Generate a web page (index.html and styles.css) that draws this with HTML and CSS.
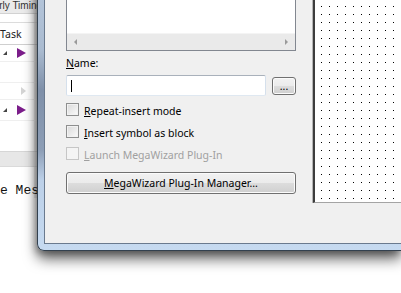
FILE: index.html
```html
<!DOCTYPE html>
<html lang="en">
<head>
    <meta charset="UTF-8">
    <title>Symbol</title>
    <link rel="stylesheet" href="styles.css">
</head>
<body>
<div class="desk">

    <!-- main window, partly hidden behind the dialog -->
    <div class="behind">
        <div class="behind-title">Early Timing</div>
        <div class="behind-gap"></div>
        <div class="behind-head">Task</div>
        <div class="behind-row"><span class="tri-small"></span><span class="tri-play"></span></div>
        <div class="behind-row tall"></div>
        <div class="behind-row"><span class="tri-ghost"></span></div>
        <div class="behind-row tall"><span class="tri-small"></span><span class="tri-play"></span></div>
        <div class="behind-fill"></div>
        <div class="behind-bar"></div>
        <div class="behind-msg">e Messages</div>
    </div>

    <!-- symbol dialog -->
    <div class="dialog">
        <div class="client">
            <div class="form">
                <div class="listbox">
                    <div class="hscroll">
                        <span class="arrow-left"></span>
                        <span class="arrow-right"></span>
                    </div>
                </div>

                <div class="name-label"><u>N</u>ame:</div>
                <div class="name-row">
                    <div class="textbox"><span class="caret"></span></div>
                    <button class="btn browse">...</button>
                </div>

                <label class="check"><span class="box"></span><span class="check-text"><u>R</u>epeat-insert mode</span></label>
                <label class="check"><span class="box"></span><span class="check-text"><u>I</u>nsert symbol as block</span></label>
                <label class="check disabled"><span class="box"></span><span class="check-text"><u>L</u>aunch MegaWizard Plug-In</span></label>

                <button class="btn wizard"><u>M</u>egaWizard Plug-In Manager...</button>
            </div>

            <div class="canvas">
                <svg width="100%" height="100%">
                    <defs>
                        <pattern id="grid" width="8" height="8" patternUnits="userSpaceOnUse">
                            <rect x="6" y="6" width="1" height="1" fill="#000"/>
                        </pattern>
                    </defs>
                    <rect width="100%" height="100%" fill="url(#grid)"/>
                </svg>
            </div>
        </div>
    </div>

</div>
</body>
</html>
```

FILE: styles.css
```css
body {
    margin: 0; width: 401px; height: 293px; overflow: hidden; background: #fff;
    font-family: "Noto Sans", "Liberation Sans", sans-serif; font-size: 10.5px; color: #000;
}
.desk { display: flex; align-items: flex-start; height: 293px; }

/* window behind */
.behind { width: 37px; flex: none; overflow: hidden; color: #222; box-shadow: inset -3px 0 0 #ececec; }
.behind-title {
    height: 13px; line-height: 11px; background: #ebebeb; border-bottom: 1px solid #d2d2d2;
    white-space: nowrap; text-indent: -13px; color: #333;
    font-family: "Liberation Sans", sans-serif; font-size: 10px;
}
.behind-gap { height: 8px; border-bottom: 1px solid #dcdcdc; }
.behind-head { height: 21px; line-height: 22px; border-bottom: 1px solid #cfcfcf; }
.behind-row {
    height: 16px; display: flex; align-items: center; gap: 10px; padding-left: 3px;
    border-bottom: 1px solid #efefef;
}
.behind-row.tall { height: 20px; }
.tri-small { width: 0; height: 0; border-left: 4px solid transparent; border-bottom: 4px solid #444; }
.tri-play { width: 0; height: 0; border-top: 5px solid transparent; border-bottom: 5px solid transparent; border-left: 9px solid #7b1d8a; }
.tri-ghost {
    width: 0; height: 0; margin-left: 18px;
    border-top: 4px solid transparent; border-bottom: 4px solid transparent; border-left: 5px solid #d4d4d4;
}
.behind-fill { height: 30px; }
.behind-bar { height: 14px; background: #e7e7e7; border-top: 1px solid #d6d6d6; border-bottom: 1px solid #dadada; }
.behind-msg {
    margin-top: 17px; white-space: nowrap;
    font-family: "Liberation Mono", monospace; font-size: 13px; line-height: 14px; color: #111;
}

/* dialog */
.dialog {
    flex: 1; position: relative; z-index: 1;
    margin-top: -40px; height: 291px; box-sizing: border-box;
    padding: 0 0 6px 6px;
    border-left: 1px solid #33414f; border-bottom: 1px solid #33414f; border-bottom-left-radius: 7px;
    background: linear-gradient(#b9cadf 0, #aabbd0 90px, #7f90a9 130px, #8d9eb6 190px, #bcd0e8 220px, #c6daf0 100%);
    box-shadow: 0 8px 14px rgba(0, 0, 0, 0.6), -2px 3px 6px rgba(0, 0, 0, 0.25);
}
.client {
    height: 100%; box-sizing: border-box; display: flex; align-items: flex-start;
    background: #f0f0f0; border-left: 1px solid #6a7a8e; border-bottom: 1px solid #6a7a8e;
}
.form { flex: none; width: 230px; margin-left: 21px; display: flex; flex-direction: column; }

.listbox {
    height: 91px; box-sizing: border-box; background: #fff; border: 1px solid #828790;
    display: flex; flex-direction: column; justify-content: flex-end;
}
.hscroll {
    height: 16px; background: #eaeaea; border-top: 1px solid #f4f4f4;
    display: flex; align-items: center; justify-content: space-between; padding: 0 7px;
}
.arrow-left { width: 0; height: 0; border-top: 3px solid transparent; border-bottom: 3px solid transparent; border-right: 3px solid #9a9a9a; }
.arrow-right { width: 0; height: 0; border-top: 3px solid transparent; border-bottom: 3px solid transparent; border-left: 3px solid #9a9a9a; }

.name-label { margin-top: 5px; line-height: 14px; }
.name-row { margin-top: 5px; display: flex; align-items: center; gap: 6px; }
.textbox {
    width: 200px; height: 21px; box-sizing: border-box; background: #fff;
    border: 1px solid; border-color: #a9b1bb #d5e0ec #dfe8f1 #d5e0ec; border-radius: 2px;
    display: flex; align-items: center; padding-left: 4px;
}
.caret { width: 1px; height: 12px; background: #000; }

.btn {
    font-family: inherit; font-size: inherit; color: #000; padding: 0;
    border: 1px solid #707070; border-radius: 3px;
    background: linear-gradient(#f2f2f2 0%, #ebebeb 50%, #dddddd 50%, #cfcfcf 100%);
    box-shadow: inset 0 0 0 1px #fbfbfb;
}
.browse { width: 24px; height: 18px; line-height: 12px; }
.wizard { margin-top: 8px; height: 22px; width: 230px; }

.check { display: flex; align-items: flex-start; height: 22px; }
.check:first-of-type { margin-top: 2px; }
.box {
    width: 13px; height: 13px; box-sizing: border-box; margin-top: 5px; margin-right: 5px;
    border: 1px solid #8e8f8f; background: linear-gradient(135deg, #d9d9d9, #fbfbfb);
    box-shadow: inset 0 0 0 1px #f2f2f2;
}
.check-text { margin-top: 6px; line-height: 14px; }
.check.disabled .box { border-color: #c6c6c6; background: #f4f4f4; box-shadow: none; }
.check.disabled .check-text { color: #a0a0a0; }

/* symbol canvas */
.canvas {
    flex: 1; margin-left: 17px; height: 243px; box-sizing: border-box; background: #fff;
    border-left: 2px solid #3c3c3c; border-bottom: 1px solid #a4a4a4;
    box-shadow: -1px 0 0 #b4b4b4;
}
.canvas svg { display: block; }
```
